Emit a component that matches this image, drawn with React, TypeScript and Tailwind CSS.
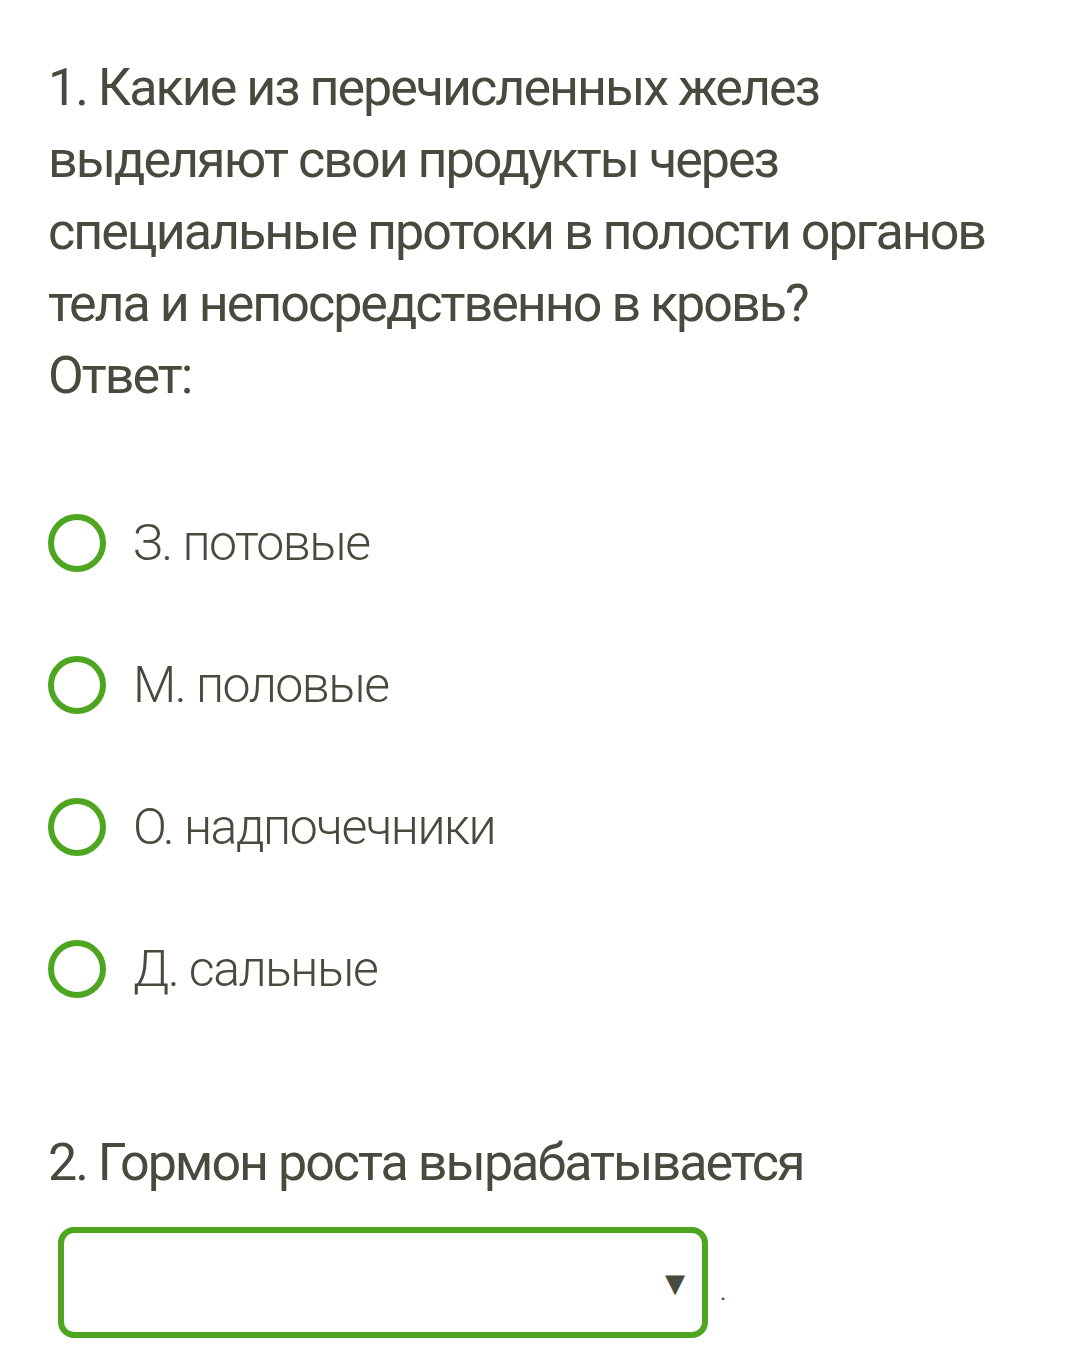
const options = ["З. потовые", "М. половые", "О. надпочечники", "Д. сальные"];

function Radio() {
	return (
		<span className="block w-[58px] h-[58px] rounded-full border-[6px] border-[#4ea51f] flex-none" />
	);
}

export default function App() {
	return (
		<div
			className="w-[1080px] h-[1372px] bg-white text-[#494a3e] px-[48px] pt-[52px]"
			style={{ fontFamily: "Roboto, 'Noto Sans', sans-serif" }}
		>
			<p className="text-[52px] leading-[72px] font-normal tracking-[-2px]">
				1. Какие из перечисленных желез выделяют свои продукты через
				специальные протоки в полости органов тела и непосредственно в кровь?
			</p>
			<p className="text-[52px] leading-[72px] font-normal tracking-[-2px]">
				Ответ:
			</p>
			<div className="flex flex-col gap-[84px] mt-[102px]">
				{options.map((o) => (
					<div key={o} className="flex items-center gap-[27px] h-[58px]">
						<Radio />
						<span className="text-[50px] font-light tracking-[-1.5px] leading-none">
							{o}
						</span>
					</div>
				))}
			</div>
			<p className="mt-[129px] text-[52px] leading-[72px] font-normal tracking-[-2px]">
				2. Гормон роста вырабатывается
			</p>
			<div className="flex items-end mt-[28px] ml-[10px]">
				<div className="w-[650px] h-[111px] rounded-[16px] border-[6px] border-[#4ea51f] flex items-center justify-end pr-[10px]">
					<span className="text-[34px] leading-none">▼</span>
				</div>
				<span className="ml-[12px] mb-[34px] text-[24px] leading-none">.</span>
			</div>
		</div>
	);
}
